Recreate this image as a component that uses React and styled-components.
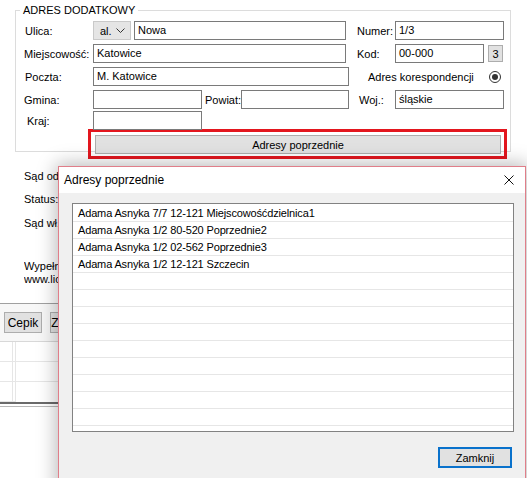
import styled, { createGlobalStyle } from "styled-components";

const GlobalStyle = createGlobalStyle`
  body {
    margin: 0;
    background: #ffffff;
    font-family: "Liberation Sans", Arial, sans-serif;
    font-size: 11px;
    color: #000;
  }
`;

const Screen = styled.div`
  position: relative;
  width: 527px;
  height: 478px;
  overflow: hidden;
  background: #ffffff;
`;

/* ---------- background window ---------- */

const Window = styled.div`
  width: 514px;
  display: flex;
  flex-direction: column;
`;

const Fieldset = styled.fieldset`
  margin: 3px 0 0 15px;
  padding: 4px 0 0 0;
  width: 496px;
  height: 149px;
  border: 1px solid #dcdcdc;
  box-sizing: border-box;
  min-width: 0;
`;

const Legend = styled.legend`
  margin-left: 4px;
  padding: 0 3px;
  line-height: 14px;
  font-size: 11px;
  color: #000;
`;

const Rows = styled.div`
  display: flex;
  flex-direction: column;
  gap: 4px;
`;

const Row = styled.div`
  display: flex;
  align-items: center;
  height: 19px;
  margin-top: ${(p) => p.$mt || 0}px;
`;

const Label = styled.span`
  flex: none;
  width: ${(p) => (p.$w ? `${p.$w}px` : "auto")};
  margin-left: ${(p) => p.$ml || 0}px;
  padding-left: ${(p) => p.$pl || 0}px;
  box-sizing: border-box;
  white-space: nowrap;
`;

const Input = styled.div`
  flex: none;
  width: ${(p) => p.$w}px;
  height: 19px;
  margin-left: ${(p) => p.$ml || 0}px;
  box-sizing: border-box;
  border: 1px solid #7a7a7a;
  background: #fff;
  padding-left: 3px;
  line-height: 17px;
  white-space: nowrap;
`;

const Combo = styled.div`
  flex: none;
  width: 38px;
  height: 19px;
  box-sizing: border-box;
  border: 1px solid #c9c9c9;
  background: #e5e5e5;
  display: flex;
  align-items: center;
  justify-content: space-between;
  padding: 0 5px 0 6px;
  margin-right: 3px;
`;

const SmallButton = styled.div`
  flex: none;
  width: 15px;
  height: 17px;
  margin-left: 4px;
  box-sizing: border-box;
  border: 1px solid #adadad;
  background: #e1e1e1;
  display: flex;
  align-items: center;
  justify-content: center;
`;

const Radio = styled.div`
  flex: none;
  width: 12px;
  height: 12px;
  box-sizing: border-box;
  border: 1px solid #333;
  border-radius: 50%;
  margin-left: auto;
  margin-right: 9px;
  display: flex;
  align-items: center;
  justify-content: center;
  &::after {
    content: "";
    width: 6px;
    height: 6px;
    border-radius: 50%;
    background: #333;
  }
`;

const Highlight = styled.div`
  margin: -1px 0 0 72px;
  width: 419px;
  height: 30px;
  box-sizing: border-box;
  border: 3px solid #e3161e;
  padding: 3px 3px 2px 4px;
`;

const WideButton = styled.div`
  height: 19px;
  box-sizing: border-box;
  border: 1px solid #adadad;
  background: #e1e1e1;
  display: flex;
  align-items: center;
  justify-content: center;
`;

const InfoBlock = styled.div`
  display: flex;
  flex-direction: column;
  padding: 17px 0 0 24px;
  height: 151px;
  box-sizing: border-box;
`;

// the rest of each line sits under the dialog, so it is cut at its edge
const InfoLine = styled.div`
  width: 34px;
  overflow: hidden;
  height: ${(p) => p.$h || 23}px;
  line-height: 14px;
  white-space: nowrap;
`;

const Separator = styled.div`
  height: 1px;
  background: #a0a0a0;
`;

const Toolbar = styled.div`
  display: flex;
  gap: 8px;
  padding: 8px 0 8px 4px;
  background: #f7f7f7;
`;

const ToolButton = styled.div`
  width: 38px;
  height: 21px;
  box-sizing: border-box;
  border: 1px solid #adadad;
  background: #e1e1e1;
  display: flex;
  align-items: center;
  justify-content: center;
  font-size: 12px;
`;

const Grid = styled.div`
  border-top: 1px solid #d8d8d8;
  display: grid;
  grid-template-columns: 13px 3px 1fr;
  border-bottom: 2px solid #6a6a6a;
`;

const GridCell = styled.div`
  height: 19px;
  border-bottom: 1px solid #e6e6e6;
  border-right: 1px solid #e6e6e6;
  &:last-child {
    border-bottom: none;
  }
`;

const GridBottom = styled.div`
  height: 1px;
  margin-top: 2px;
  background: #b8b8b8;
`;

/* ---------- dialog ---------- */

const Dialog = styled.div`
  position: absolute;
  left: 58px;
  top: 166px;
  width: 468px;
  height: 330px;
  box-sizing: border-box;
  border: 1px solid #e07e89;
  background: #f0f0f0;
  box-shadow: 0 0 18px 2px rgba(0, 0, 0, 0.28);
  display: flex;
  flex-direction: column;
`;

const TitleBar = styled.div`
  height: 26px;
  background: #fff;
  display: flex;
  align-items: center;
  justify-content: space-between;
  padding: 0 11px 0 5px;
  font-size: 12px;
`;

const DialogBody = styled.div`
  display: flex;
  flex-direction: column;
  padding: 10px 11px 0 13px;
`;

const List = styled.div`
  height: 229px;
  box-sizing: border-box;
  border: 1px solid #828282;
  background: #fff;
  padding-top: 1px;
  overflow: hidden;
`;

const ListRow = styled.div`
  height: 16px;
  line-height: 16px;
  padding-left: 5px;
  border-bottom: 1px solid #e6e6e6;
  white-space: nowrap;
  letter-spacing: -0.15px;
`;

const Footer = styled.div`
  display: flex;
  justify-content: flex-end;
  padding: 15px 2px 0 0;
`;

const DefaultButton = styled.div`
  width: 74px;
  height: 21px;
  box-sizing: border-box;
  border: 2px solid #0a72cc;
  background: #e1e1e1;
  display: flex;
  align-items: center;
  justify-content: center;
`;

const Chevron = () => (
  <svg width="9" height="6" viewBox="0 0 9 6">
    <polyline points="0.5,0.5 4.5,4.5 8.5,0.5" fill="none" stroke="#333" strokeWidth="1" />
  </svg>
);

const CloseIcon = () => (
  <svg width="10" height="10" viewBox="0 0 10 10">
    <path d="M0.5 0.5 L9.5 9.5 M9.5 0.5 L0.5 9.5" stroke="#111" strokeWidth="1" />
  </svg>
);

const addresses = [
  "Adama Asnyka 7/7 12-121 Miejscowośćdzielnica1",
  "Adama Asnyka 1/2 80-520 Poprzednie2",
  "Adama Asnyka 1/2 02-562 Poprzednie3",
  "Adama Asnyka 1/2 12-121 Szczecin",
];

const App = () => {
  const rows = [...addresses, ...Array(10).fill("")];
  return (
    <>
      <GlobalStyle />
      <Screen>
        <Window>
          <Fieldset>
            <Legend>ADRES DODATKOWY</Legend>
            <Rows>
              <Row>
                <Label $w={77} $pl={9}>Ulica:</Label>
                <Combo>
                  <span>al.</span>
                  <Chevron />
                </Combo>
                <Input $w={212}>Nowa</Input>
                <Label $w={38} $ml={11}>Numer:</Label>
                <Input $w={109}>1/3</Input>
              </Row>
              <Row>
                <Label $w={77} $pl={8}>Miejscowość:</Label>
                <Input $w={253}>Katowice</Input>
                <Label $w={38} $ml={11}>Kod:</Label>
                <Input $w={89}>00-000</Input>
                <SmallButton>3</SmallButton>
              </Row>
              <Row>
                <Label $w={77} $pl={9}>Poczta:</Label>
                <Input $w={256}>M. Katowice</Input>
                <Label $ml={19}>Adres korespondencji</Label>
                <Radio />
              </Row>
              <Row>
                <Label $w={77} $pl={8}>Gmina:</Label>
                <Input $w={109}>&nbsp;</Input>
                <Label $w={36} $ml={3}>Powiat:</Label>
                <Input $w={108}>&nbsp;</Input>
                <Label $w={36} $ml={10}>Woj.:</Label>
                <Input $w={109}>śląskie</Input>
              </Row>
              <Row $mt={-2}>
                <Label $w={77} $pl={11}>Kraj:</Label>
                <Input $w={109}>&nbsp;</Input>
              </Row>
            </Rows>
            <Highlight>
              <WideButton>Adresy poprzednie</WideButton>
            </Highlight>
          </Fieldset>
          <InfoBlock>
            <InfoLine>Sąd odwoławczy:</InfoLine>
            <InfoLine $h={24}>Status:</InfoLine>
            <InfoLine $h={43}>Sąd wł.:</InfoLine>
            <InfoLine $h={13}>Wypełnij dane ze strony</InfoLine>
            <InfoLine>www.licencje.pl</InfoLine>
          </InfoBlock>
          <Separator />
          <Toolbar>
            <ToolButton>Cepik</ToolButton>
            <ToolButton>Zapisz</ToolButton>
          </Toolbar>
          <Grid>
            {Array.from({ length: 9 }).map((_, i) => (
              <GridCell key={i} />
            ))}
          </Grid>
          <GridBottom />
        </Window>

        <Dialog>
          <TitleBar>
            <span>Adresy poprzednie</span>
            <CloseIcon />
          </TitleBar>
          <DialogBody>
            <List>
              {rows.map((r, i) => (
                <ListRow key={i}>{r || "\u00a0"}</ListRow>
              ))}
            </List>
            <Footer>
              <DefaultButton>Zamknij</DefaultButton>
            </Footer>
          </DialogBody>
        </Dialog>
      </Screen>
    </>
  );
};

export default App;
